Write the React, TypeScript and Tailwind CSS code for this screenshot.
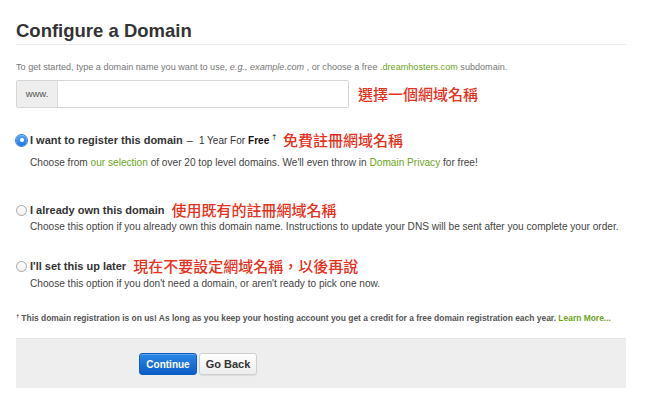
import React, { useState } from 'react';

const sans = { fontFamily: '"Liberation Sans", Arial, sans-serif' };
const cjk = { fontFamily: '"Noto Sans CJK TC", "Noto Sans CJK SC", sans-serif' };

const Note = ({ children }: { children: React.ReactNode }) => (
  <span style={cjk} className="ml-[7px] text-[15px] font-medium leading-[16px] text-[#e5321c]">
    {children}
  </span>
);

const Radio = ({ checked }: { checked: boolean }) =>
  checked ? (
    <span className="flex h-[11px] w-[11px] items-center justify-center rounded-full bg-gradient-to-b from-[#5aa7f7] to-[#1f74e0] shadow-[0_0_0_1px_#2f7fe0]">
      <span className="h-[4px] w-[4px] rounded-full bg-white" />
    </span>
  ) : (
    <span className="h-[11px] w-[11px] rounded-full border border-[#a8a8a8] bg-gradient-to-b from-white to-[#f1f1f1]" />
  );

export default function App() {
  const [choice, setChoice] = useState<'register' | 'own' | 'later'>('register');

  const options = [
    {
      key: 'register' as const,
      title: 'I want to register this domain',
      extra: (
        <>
          <span className="ml-[4px] text-[11px] text-[#333]">–</span>
          <span className="ml-[6px] text-[10px] text-[#333]">1 Year For</span>
          <span className="ml-[3px] text-[10px] font-bold text-[#111]">Free</span>
          <sup className="ml-[3px] text-[7px] font-bold text-[#333]">†</sup>
        </>
      ),
      note: '免費註冊網域名稱',
      desc: (
        <>
          Choose from <span className="text-[#6ea322]">our selection</span> of over 20 top level domains. We'll even throw in{' '}
          <span className="text-[#6ea322]">Domain Privacy</span> for free!
        </>
      ),
      gap: 'mt-[24px]',
      descGap: 'mt-[8px]',
    },
    {
      key: 'own' as const,
      title: 'I already own this domain',
      extra: null,
      note: '使用既有的註冊網域名稱',
      desc: 'Choose this option if you already own this domain name. Instructions to update your DNS will be sent after you complete your order.',
      gap: 'mt-[32px]',
      descGap: 'mt-[2px]',
    },
    {
      key: 'later' as const,
      title: "I'll set this up later",
      extra: null,
      note: '現在不要設定網域名稱，以後再說',
      desc: "Choose this option if you don't need a domain, or aren't ready to pick one now.",
      gap: 'mt-[24px]',
      descGap: 'mt-[3px]',
    },
  ];

  return (
    <div style={sans} className="h-[405px] w-[650px] overflow-hidden bg-white px-[16px]">
      <div className="w-[610px]">
        <h1 className="border-b border-[#ececec] pb-[1px] pt-[19px] text-[18.5px] font-bold leading-[24px] text-[#333]">
          Configure a Domain
        </h1>

        <p className="mt-[16px] text-[9.1px] leading-[12px] text-[#777]">
          To get started, type a domain name you want to use, <i>e.g., example.com</i> , or choose a free{' '}
          <span className="text-[#6ea322]">.dreamhosters.com</span> subdomain.
        </p>

        <div className="mt-[7px] flex items-center">
          <div className="flex h-[28px] w-[333px] overflow-hidden rounded-[2px] border border-[#d6d6d6] shadow-[inset_0_1px_1px_rgba(0,0,0,0.05)]">
            <span className="flex w-[41px] items-center justify-center border-r border-[#dcdcdc] bg-[#eeeeee] text-[9.5px] text-[#555]">
              www.
            </span>
            <input className="flex-1 bg-white px-2 text-[11px] outline-none" />
          </div>
          <span style={cjk} className="ml-[9px] text-[15px] font-medium text-[#e5321c]">
            選擇一個網域名稱
          </span>
        </div>

        {options.map((o) => (
          <div key={o.key} className={o.gap}>
            <label className="flex h-[16px] cursor-pointer items-center" onClick={() => setChoice(o.key)}>
              <Radio checked={choice === o.key} />
              <span className="ml-[3px] text-[11px] font-bold text-[#333]">{o.title}</span>
              {o.extra}
              <Note>{o.note}</Note>
            </label>
            <p className={`${o.descGap} pl-[14px] text-[10.1px] leading-[14px] text-[#444]`}>{o.desc}</p>
          </div>
        ))}

        <p className="mt-[21px] text-[8.45px] font-bold leading-[12px] text-[#555]">
          <sup className="mr-[2px] text-[6px]">†</sup>This domain registration is on us! As long as you keep your hosting account you get a
          credit for a free domain registration each year. <span className="text-[#6ea322]">Learn More...</span>
        </p>

        <div className="mt-[14px] flex h-[50px] gap-[2px] border-t border-[#e2e2e2] bg-[#eeeeee] pl-[123px] pt-[14px]">
          <button className="h-[22px] w-[58px] rounded-[3px] border border-[#0d5cbf] bg-gradient-to-b from-[#2b86e6] to-[#0b5ec8] text-[10px] font-bold text-white shadow-[inset_0_1px_0_rgba(255,255,255,0.25)]">
            Continue
          </button>
          <button className="h-[22px] w-[58px] rounded-[3px] border border-[#cfcfcf] bg-gradient-to-b from-white to-[#ececec] text-[11px] font-bold text-[#333] shadow-[0_1px_1px_rgba(0,0,0,0.08)]">
            Go Back
          </button>
        </div>
      </div>
    </div>
  );
}
